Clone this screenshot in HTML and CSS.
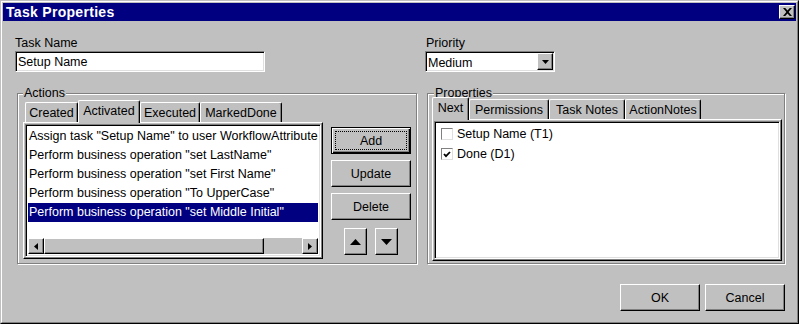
FILE: index.html
```html
<!DOCTYPE html>
<html>
<head>
  <meta charset="utf-8">
  <title>Task Properties</title>
  <link rel="stylesheet" href="styles.css">
</head>
<body>
<div class="window">
  <div class="frame">
    <div class="titlebar">
      <span class="title">Task Properties</span>
      <span class="raised close"><svg width="9" height="8" viewBox="0 0 9 8"><path d="M0 0h2.2l2.3 2.6 2.3-2.6h2.2l-3.4 4 3.4 4h-2.2l-2.3-2.6-2.3 2.6h-2.2l3.4-4z"/></svg></span>
    </div>

    <div class="content">
      <div class="fields">
        <div class="field name">
          <div class="label">Task Name</div>
          <div class="sunken textbox">Setup Name</div>
        </div>
        <div class="field priority">
          <div class="label">Priority</div>
          <div class="sunken combo">
            <span class="combo-text">Medium</span>
            <span class="raised combo-btn"><svg width="7" height="4" viewBox="0 0 7 4"><polygon points="0,0 7,0 3.5,4"/></svg></span>
          </div>
        </div>
      </div>

      <div class="groups">
        <fieldset class="group actions">
          <legend>Actions</legend>
          <div class="tabpane">
            <div class="tabs">
              <span class="tab t-created">Created</span>
              <span class="tab on t-activated">Activated</span>
              <span class="tab t-executed">Executed</span>
              <span class="tab t-done">MarkedDone</span>
            </div>
            <div class="panel">
              <div class="sunken list">
                <div class="rows">
                  <div class="row">Assign task "Setup Name" to user WorkflowAttribute("Assignee")</div>
                  <div class="row">Perform business operation "set LastName"</div>
                  <div class="row">Perform business operation "set First Name"</div>
                  <div class="row">Perform business operation "To UpperCase"</div>
                  <div class="row sel">Perform business operation "set Middle Initial"</div>
                </div>
                <div class="hscroll">
                  <span class="raised sb-btn"><svg width="4" height="7" viewBox="0 0 4 7"><polygon points="4,0 4,7 0,3.5"/></svg></span>
                  <span class="raised sb-thumb"></span>
                  <span class="sb-track"></span>
                  <span class="raised sb-btn"><svg width="4" height="7" viewBox="0 0 4 7"><polygon points="0,0 0,7 4,3.5"/></svg></span>
                </div>
              </div>
            </div>
          </div>
          <div class="side">
            <button class="btn default"><span class="cap">Add</span></button>
            <button class="btn"><span class="cap">Update</span></button>
            <button class="btn"><span class="cap">Delete</span></button>
            <div class="moves">
              <button class="btn move"><svg width="11" height="6" viewBox="0 0 11 6"><polygon points="0,6 11,6 5.5,0"/></svg></button>
              <button class="btn move"><svg width="11" height="6" viewBox="0 0 11 6"><polygon points="0,0 11,0 5.5,6"/></svg></button>
            </div>
          </div>
        </fieldset>

        <fieldset class="group props">
          <legend>Properties</legend>
          <div class="tabpane">
            <div class="tabs first-on">
              <span class="tab on t-next">Next</span>
              <span class="tab t-perm">Permissions</span>
              <span class="tab t-notes">Task Notes</span>
              <span class="tab t-anotes">ActionNotes</span>
            </div>
            <div class="panel">
              <div class="sunken checks">
                <div class="check"><span class="box"></span>Setup Name (T1)</div>
                <div class="check"><span class="box"><svg width="8" height="7" viewBox="0 0 8 7"><polyline points="1,3 3,5.2 7,1" fill="none" stroke="#000" stroke-width="1.8"/></svg></span>Done (D1)</div>
              </div>
            </div>
          </div>
        </fieldset>
      </div>

      <div class="footer">
        <button class="btn">OK</button>
        <button class="btn">Cancel</button>
      </div>
    </div>
  </div>
</div>
</body>
</html>
```

FILE: styles.css
```css
* { box-sizing: border-box; }
html, body { margin: 0; padding: 0; background: #c0c0c0; }
body { font: 12.5px/14px "Liberation Sans", Arial, sans-serif; color: #000; }
svg { display: block; }

/* window chrome */
.window {
  width: 799px;
  height: 324px;
  border: 1px solid;
  border-color: #c0c0c0 #000 #000 #c0c0c0;
}
.frame {
  height: 100%;
  border: 1px solid;
  border-color: #fff #808080 #808080 #fff;
  padding: 1px;
  display: flex;
  flex-direction: column;
}
.titlebar {
  height: 18px;
  background: #000080;
  color: #fff;
  display: flex;
  align-items: center;
  justify-content: space-between;
  padding: 0 1px 0 3px;
}
.title { font-weight: bold; font-size: 14px; line-height: 18px; letter-spacing: .3px; }
.close {
  width: 16px;
  height: 14px;
  display: flex;
  align-items: center;
  justify-content: center;
}

/* 3d borders */
.raised {
  background: #c0c0c0;
  border: 1px solid;
  border-color: #fff #000 #000 #fff;
  box-shadow: inset -1px -1px #808080;
}
.sunken {
  background: #fff;
  border: 1px solid;
  border-color: #808080 #fff #fff #808080;
  box-shadow: inset 1px 1px #000, inset -1px -1px #dfdfdf;
}

.content {
  flex: 1;
  padding: 15px 11px 0 12px;
}

/* top fields */
.fields { display: flex; gap: 160px; }
.field.name { width: 250px; }
.field.priority { width: 130px; }
.label { height: 15px; }
.priority .label { padding-left: 1px; }
.textbox {
  height: 21px;
  padding: 1px 2px 0;
  line-height: 18px;
}
.combo {
  height: 21px;
  display: flex;
  padding: 1px;
}
.combo-text { flex: 1; line-height: 18px; padding: 1px 0 0 1px; }
.combo-btn {
  width: 16px;
  display: flex;
  align-items: center;
  justify-content: center;
}

/* group boxes */
.groups {
  display: flex;
  gap: 10px;
  margin: 14px 0 0 2px;
}
.group {
  margin: 0;
  border: 1px solid #808080;
  box-shadow: inset 1px 1px #fff, 1px 1px #fff;
  display: flex;
  min-width: 0;
}
.group legend {
  padding: 0 1px;
  line-height: 14px;
  background: #c0c0c0;
}
.actions { width: 400px; padding: 0 5px 4px 5px; }
.props { width: 358px; padding: 0 2px 2px 4px; flex-direction: column; }
.props legend { margin-left: 2px; }

/* tabs */
.tabpane { display: flex; flex-direction: column; }
.actions .tabpane { width: 300px; }
.props .tabpane { width: 350px; flex: 1; margin-top: -3px; }
.tabs {
  display: flex;
  align-items: flex-end;
  height: 22px;
  padding-left: 2px;
}
.tabs.first-on { padding-left: 0; }
.tab {
  height: 20px;
  border: 1px solid #fff;
  border-bottom: 0;
  border-right-color: #000;
  border-radius: 2px 2px 0 0;
  box-shadow: inset -1px 0 #808080;
  padding-top: 1px;
  line-height: 18px;
  text-align: center;
  white-space: nowrap;
}
.tab.on {
  height: 23px;
  margin-bottom: -1px;
  background: #c0c0c0;
  position: relative;
  z-index: 1;
}
.t-created { width: 53px; }
.t-activated { width: 62px; }
.t-executed { width: 60px; }
.t-done { width: 82px; }
.t-next { width: 37px; }
.t-perm { width: 80px; }
.t-notes { width: 76px; }
.t-anotes { width: 76px; }

.panel {
  flex: 1;
  display: flex;
  border: 1px solid;
  border-color: #fff #000 #000 #fff;
  box-shadow: inset -1px -1px #808080;
  padding: 1px;
}
.actions .panel { height: 137px; flex: none; }

/* list */
.list {
  flex: 1;
  padding: 2px;
  display: flex;
  flex-direction: column;
  min-width: 0;
}
.rows { flex: 1; overflow: hidden; }
.row {
  height: 19px;
  line-height: 19px;
  padding-left: 1px;
  white-space: nowrap;
}
.row.sel { background: #000080; color: #fff; }
.hscroll { height: 16px; display: flex; background: #c0c0c0; }
.sb-btn {
  width: 16px;
  display: flex;
  align-items: center;
  justify-content: center;
}
.sb-thumb { width: 220px; }
.sb-track { flex: 1; }

/* side buttons */
.side {
  width: 80px;
  margin: 27px 0 0 8px;
  display: flex;
  flex-direction: column;
  gap: 6px;
}
.btn {
  font: inherit;
  color: #000;
  margin: 0;
  padding: 0;
  width: 80px;
  height: 27px;
  background: #c0c0c0;
  border: 1px solid;
  border-color: #fff #000 #000 #fff;
  box-shadow: inset -1px -1px #808080;
  display: flex;
  align-items: center;
  justify-content: center;
}
.btn.default {
  border-color: #000;
  padding: 3px;
  box-shadow: inset 1px 1px #fff, inset -1px -1px #000, inset -2px -2px #808080;
}
.cap { flex: 1; align-self: stretch; display: flex; align-items: center; justify-content: center; }
.default .cap { border: 1px dotted #000; }
.moves {
  display: flex;
  justify-content: center;
  gap: 8px;
  margin-top: 2px;
}
.btn.move { width: 23px; }

/* checks */
.checks { flex: 1; padding: 2px 2px 2px 6px; }
.check {
  height: 20px;
  display: flex;
  align-items: center;
  gap: 4px;
}
.box {
  width: 12px;
  height: 12px;
  background: #fff;
  border: 1px solid;
  border-color: #808080 #dfdfdf #dfdfdf #808080;
  display: flex;
  align-items: center;
  justify-content: center;
}

/* footer */
.footer {
  display: flex;
  justify-content: flex-end;
  gap: 5px;
  margin-top: 20px;
}
```
